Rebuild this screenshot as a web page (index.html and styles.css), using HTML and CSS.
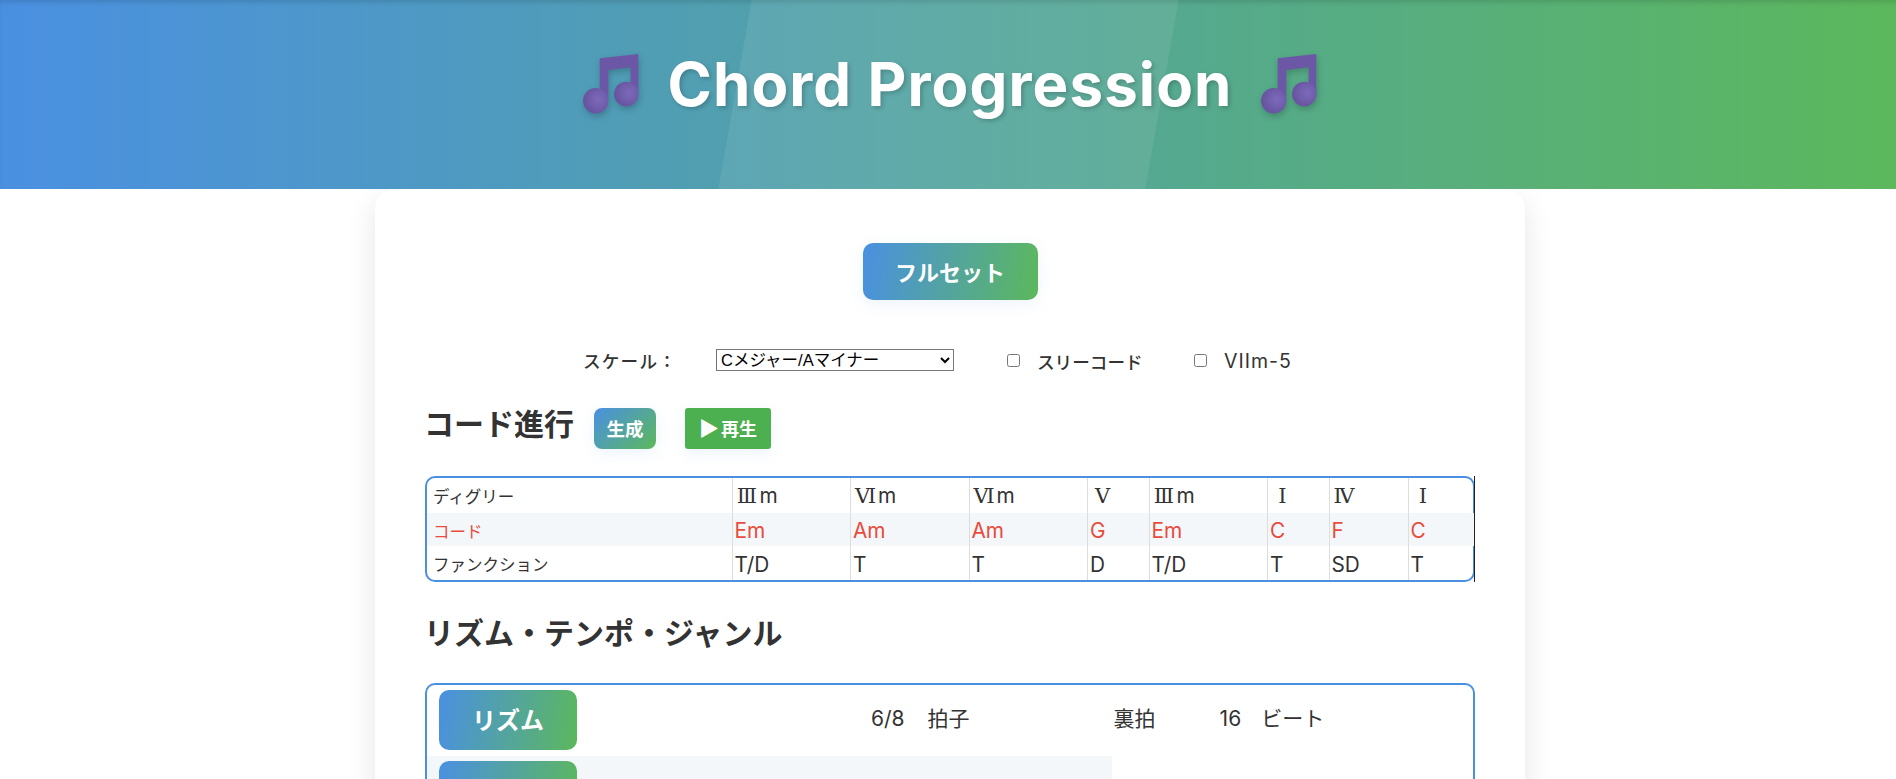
FILE: index.html
```html
<!DOCTYPE html>
<html lang="ja">
<head>
<meta charset="utf-8">
<title>Chord Progression</title>
<link rel="stylesheet" href="styles.css">
</head>
<body>
<div class="page">
  <header class="hero">
    <svg class="note" viewBox="0 0 56 60" aria-hidden="true">
      <defs>
        <radialGradient id="h1" cx="0.62" cy="0.45" r="0.6"><stop offset="0" stop-color="#7c69bb"/><stop offset="1" stop-color="#67549f"/></radialGradient>
      </defs>
      <path class="note-body" d="M16.700 4.300 L55.300 0 V41 H47.700 V13.300 L25.300 16 V46 H16.700 Z"/>
      <circle cx="12.700" cy="46.700" r="12.700" fill="url(#h1)"/>
      <circle cx="43.300" cy="40" r="12.300" fill="url(#h1)"/>
    </svg>
    <h1 class="title">Chord Progression</h1>
    <svg class="note" viewBox="0 0 56 60" aria-hidden="true">
      <path class="note-body" d="M16.700 4.300 L55.300 0 V41 H47.700 V13.300 L25.300 16 V46 H16.700 Z"/>
      <circle cx="12.700" cy="46.700" r="12.700" fill="url(#h1)"/>
      <circle cx="43.300" cy="40" r="12.300" fill="url(#h1)"/>
    </svg>
  </header>
  <main class="card">
    <div class="center"><button class="btn btn-full">フルセット</button></div>
    <div class="controls">
      <label class="ctl-label">スケール：</label>
      <select class="scale"><option>Cメジャー/Aマイナー</option></select>
      <label class="check check-a"><input type="checkbox"><span>スリーコード</span></label>
      <label class="check check-b"><input type="checkbox"><span>VIIm-5</span></label>
    </div>
    <div class="sec-head">
      <h2 class="h-chord">コード進行</h2>
      <button class="btn btn-gen">生成</button>
      <button class="btn btn-play"><span class="play-ico">▶</span>再生</button>
    </div>
    <div class="frame frame-chord">
      <table class="chords">
        <colgroup><col class="c0"><col class="c1"><col class="c1"><col class="c1"><col class="c2"><col class="c1"><col class="c2"><col class="c3"><col class="c4"></colgroup>
        <tr class="r-a"><th>ディグリー</th><td><span class="rn">Ⅲ</span>m</td><td><span class="rn">Ⅵ</span>m</td><td><span class="rn">Ⅵ</span>m</td><td><span class="rn">Ⅴ</span></td><td><span class="rn">Ⅲ</span>m</td><td><span class="rn">Ⅰ</span></td><td><span class="rn">Ⅳ</span></td><td><span class="rn">Ⅰ</span></td></tr>
        <tr class="r-b"><th>コード</th><td>Em</td><td>Am</td><td>Am</td><td>G</td><td>Em</td><td>C</td><td>F</td><td>C</td></tr>
        <tr class="r-c"><th>ファンクション</th><td>T/D</td><td>T</td><td>T</td><td>D</td><td>T/D</td><td>T</td><td>SD</td><td>T</td></tr>
      </table>
    </div>
    <h2 class="h-rhythm">リズム・テンポ・ジャンル</h2>
    <div class="frame frame-rhythm">
      <div class="rrow">
        <div class="rlabel">リズム</div>
        <div class="rval r-beat"><span>6/8</span><span>拍子</span></div>
        <div class="rval r-back">裏拍</div>
        <div class="rval r-16"><span>16</span><span>ビート</span></div>
      </div>
      <div class="rrow rrow-alt">
        <div class="rlabel"></div>
      </div>
    </div>
  </main>
</div>
</body>
</html>
```
FILE: styles.css
```css
* { box-sizing: border-box; }
html, body { margin: 0; padding: 0; height: 779px; overflow: hidden; background: #fff; }
body { font-family: "Inter", "Noto Sans CJK JP", sans-serif; color: #333; }
.page { width: 1900px; }

.hero {
  height: 189px;
  background: linear-gradient(90deg, #4a90e2, #5cb85c);
  box-shadow: inset 0 4px 6px -3px rgba(0,0,0,.18);
  display: flex;
  align-items: center;
  justify-content: center;
  gap: 28px;
  padding-bottom: 22px;
  position: relative;
  overflow: hidden;
}
.hero::before {
  content: "";
  position: absolute;
  top: 0; bottom: 0;
  left: 735px;
  width: 427px;
  background: rgba(255,255,255,.08);
  transform: skewX(-10deg);
}
.note { width: 56px; height: 60px; filter: drop-shadow(1px 3px 3px rgba(0,0,0,.2)); position: relative; flex: none; }
.note-body { fill: #6b57a5; }
.title {
  margin: 0;
  font-size: 60px;
  letter-spacing: 1.1px;
  font-weight: 700;
  color: #fff;
  text-shadow: 2px 2px 4px rgba(0,0,0,.2);
  line-height: 1.2;
  white-space: nowrap;
  position: relative;
}

.card {
  width: 1150px;
  height: 700px;
  margin: 0 auto;
  padding: 54px 50px 0;
  background: #fff;
  border-radius: 20px;
  box-shadow: 0 10px 30px rgba(0,0,0,.1);
}
.center { display: flex; justify-content: center; }
.btn { border: 0; color: #fff; font-family: inherit; font-weight: 700; padding: 0 0 2px; }
.btn-full {
  width: 175px; height: 57px;
  font-size: 22px;
  border-radius: 10px;
  background: linear-gradient(100deg, #4a90e2, #5cb85c);
  box-shadow: 0 4px 15px rgba(74,144,226,.1);
}

.controls {
  display: flex;
  align-items: center;
  height: 22px;
  margin: 49px 0 0 158px;
  font-size: 17.6px;
  font-weight: 500;
}
.ctl-label { width: 133px; letter-spacing: 1.2px; }
.scale {
  width: 238px; height: 22px;
  font-family: "Liberation Sans", "Noto Sans CJK JP", sans-serif;
  font-size: 16.500px;
  background: #fff;
}
.check { display: flex; align-items: center; }
.check span { position: relative; top: 1px; }
.check input { margin: 0 17px 0 0; width: 13px; height: 13px; }
.check-a { margin-left: 53px; width: 187px; }
.check-b span { font-size: 19.500px; letter-spacing: 1px; font-weight: 400; }

.sec-head { display: flex; align-items: center; height: 41px; margin-top: 37px; }
h2 { margin: 0; font-weight: 700; color: #333; }
.h-chord { font-size: 30px; margin: -13px 0 0 -1px; width: 170px; }
.btn-gen {
  width: 62px; height: 41px; border-radius: 8px; font-size: 18.500px;
  background: linear-gradient(135deg, #4a90e2, #5cb85c);
  box-shadow: 0 4px 15px rgba(74,144,226,.1);
}
.btn-play {
  width: 86px; height: 41px; margin-left: 29px; border-radius: 3px; font-size: 18px;
  background: #4caf50;
  box-shadow: 0 4px 15px rgba(74,144,226,.1);
}
.play-ico { font-size: 21px; margin-right: 2px; }

.frame { border: 2px solid #4a90e2; border-radius: 10px; }
.frame-chord { position: relative; height: 106px; margin-top: 27px; }
.frame-chord::after {
  content: "";
  position: absolute;
  top: -2px; bottom: -2px; right: -2px;
  width: 1px;
  background: #222;
}
.chords { width: 1046px; border-collapse: collapse; table-layout: fixed; }
.c0 { width: 305px; }
.c1 { width: 118.500px; }
.c2 { width: 61.500px; }
.c3 { width: 79px; }
.c4 { width: 66px; }
.chords th { font-size: 16.500px; font-weight: 400; text-align: left; padding: 2px 0 0 6px; }
.chords td { font-size: 20.800px; padding: 2px 0 0 2px; border-left: 1px solid #ddd; }
.r-a th { padding-top: 0; }
.r-a td { padding-top: 0; }
.rn {
  display: inline-block;
  width: 25px;
  text-align: center;
  font-family: "DejaVu Serif", serif;
  font-size: 21px;
}
.r-a { height: 35px; }
.r-b { height: 33px; background: #f4f7fa; color: #e74c3c; }
.r-b th { color: #e74c3c; }
.r-c { height: 34px; }

.h-rhythm { font-size: 30px; margin: 28px 0 0 -1px; line-height: 46px; }

.frame-rhythm { height: 300px; margin-top: 27px; overflow: hidden; }
.rrow { height: 71px; display: flex; padding: 5px 0 0 12px; font-size: 21px; }
.rrow-alt { width: 685px; height: 60px; background: #f4f7fa; }
.rlabel {
  width: 138px; height: 60px; flex: none;
  border-radius: 10px;
  padding-bottom: 3px;
  background: linear-gradient(100deg, #4a90e2, #5cb85c);
  color: #fff;
  font-size: 24px;
  font-weight: 700;
  display: flex;
  align-items: center;
  justify-content: center;
}
.rval { line-height: 57px; white-space: nowrap; }
.r-beat { margin-left: 294px; }
.r-beat span + span { margin-left: 23px; }
.r-back { margin-left: 144px; }
.r-16 { margin-left: 64px; }
.r-16 span + span { margin-left: 20px; }
```
